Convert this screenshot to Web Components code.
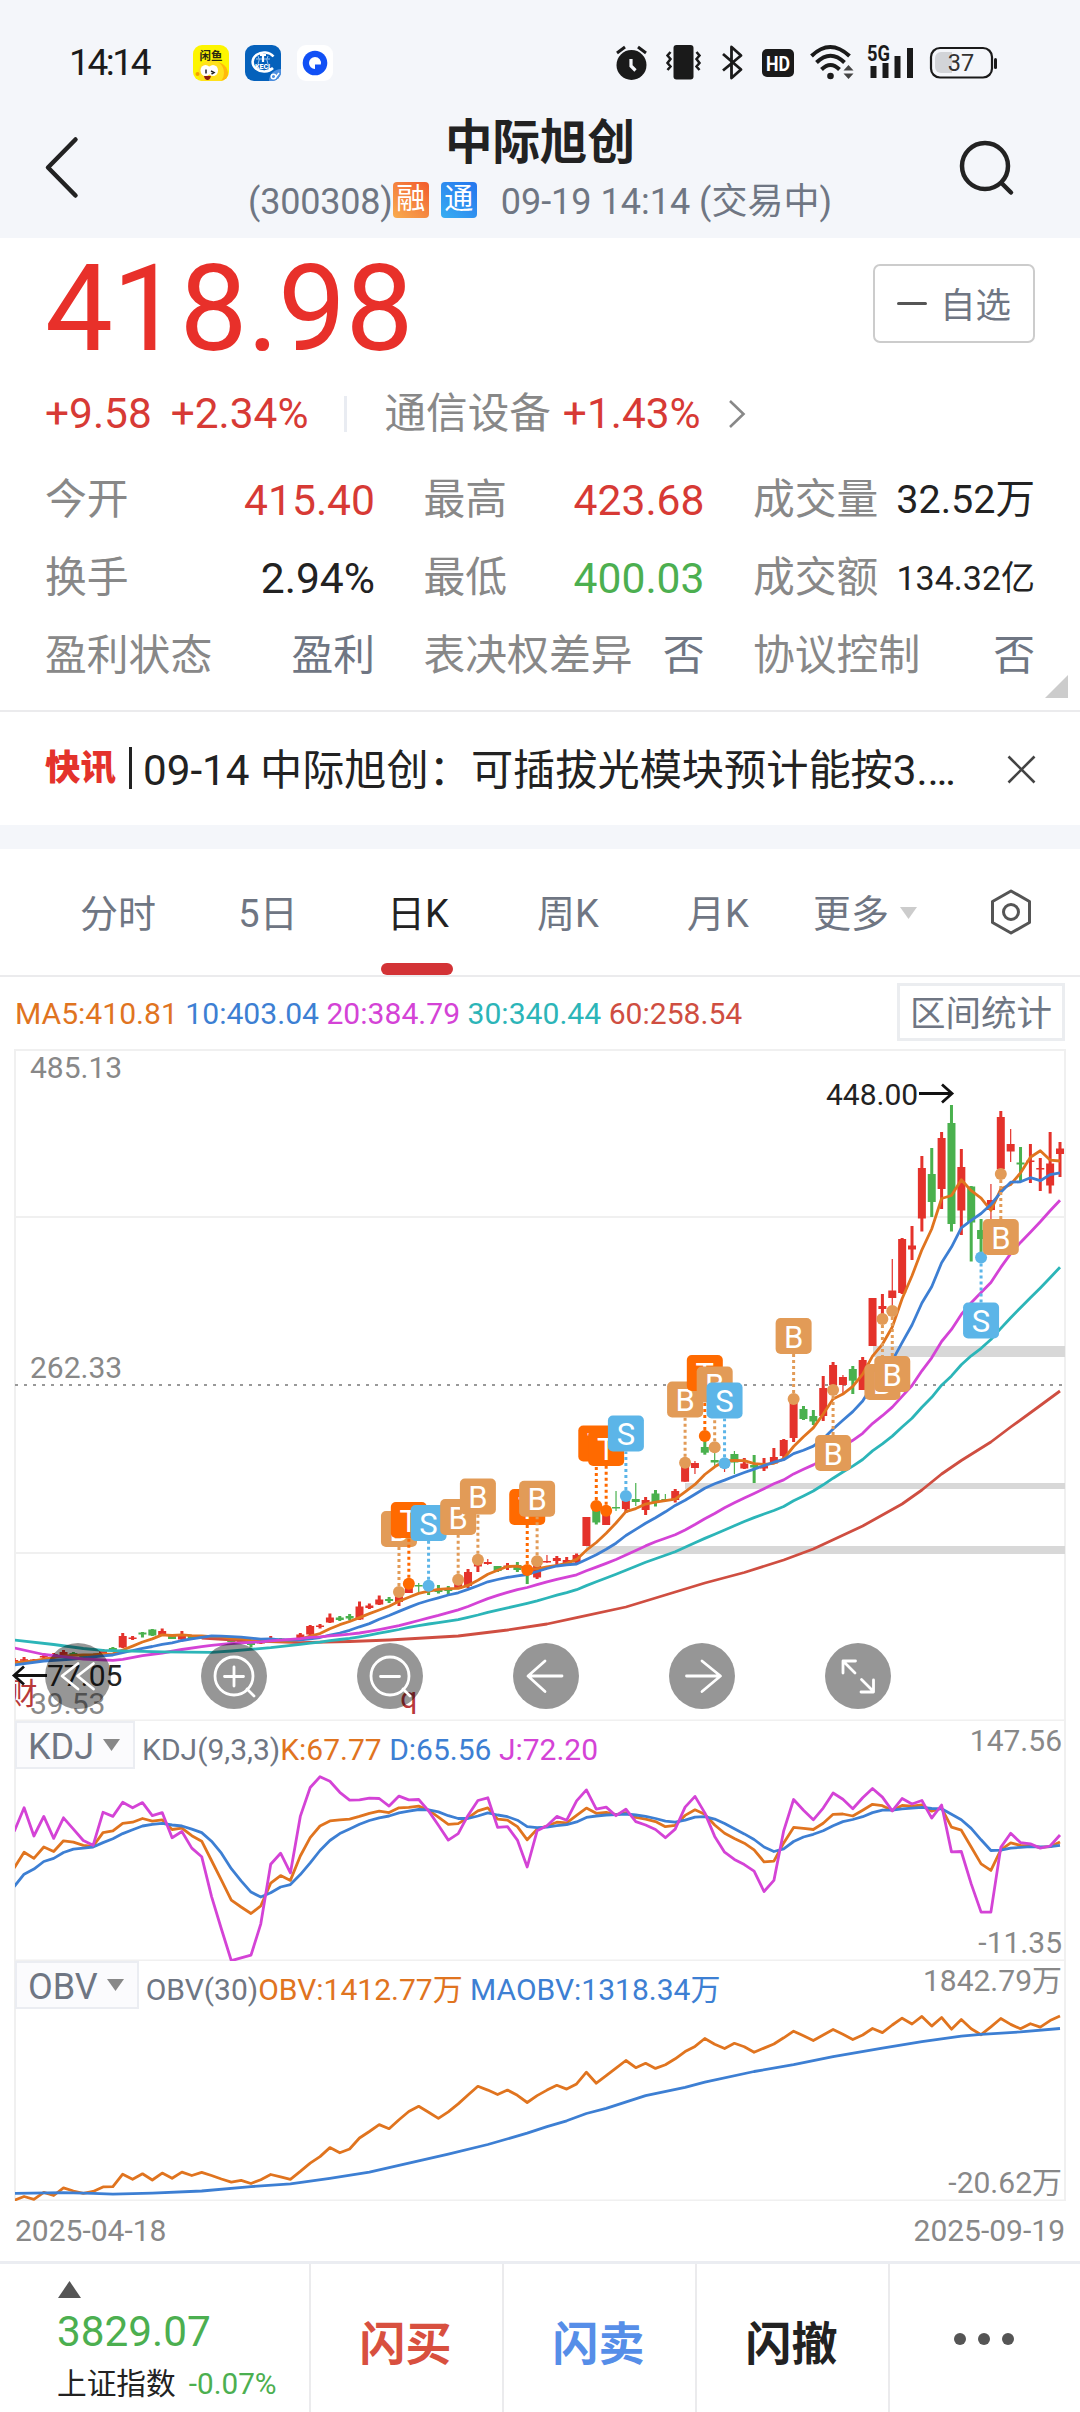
<!DOCTYPE html>
<html lang="zh-CN">
<head>
<meta charset="utf-8">
<title>中际旭创 300308</title>
<style>
    :root {
        --red: #e4322b;
        --value-red: #d73a35;
        --green: #4caf50;
        --label: #888;
        --slate: #6f7683;
        --ink: #222;
        --line: #ebebed;
        --band: #f4f6fa;
        --ma5: #e0741f;
        --ma10: #3d7fd3;
        --ma20: #d443d6;
        --ma30: #2cb5b8;
        --ma60: #cf4e41;
    }
    html, body {
        margin: 0;
        background: #fff;
    }
    body {
        width: 1080px;
        height: 2412px;
        overflow: hidden;
        display: flex;
        flex-direction: column;
        font-family: Roboto, "Noto Sans CJK SC", sans-serif;
        color: var(--ink);
    }
</style>
</head>
<body>
    <status-bar></status-bar>
    <quote-header code="300308" time="09-19 14:14 (交易中)">中际旭创</quote-header>
    <quote-summary></quote-summary>
    <news-ticker>09-14 中际旭创：可插拔光模块预计能按3.…</news-ticker>
    <chart-tabs></chart-tabs>
    <ma-legend></ma-legend>
    <kline-chart></kline-chart>
    <indicator-chart name="KDJ" params="(9,3,3)" max="147.56" min="-11.35"></indicator-chart>
    <indicator-chart name="OBV" params="(30)" max="1842.79万" min="-20.62万"></indicator-chart>
    <date-axis from="2025-04-18" to="2025-09-19"></date-axis>
    <trade-bar></trade-bar>

<script>
function define(name, html, render) {
    const template = document.createElement('template')
    template.innerHTML = html
    customElements.define(name, class extends HTMLElement {
        constructor() {
            super()
            this.attachShadow({ mode: 'open' })
            this.shadowRoot.appendChild(template.content.cloneNode(true))
        }
        connectedCallback() {
            if (render)
                render(this, this.shadowRoot)
        }
    })
}

define('status-bar', `
    <style>
        :host {
            display: flex;
            box-sizing: border-box;
            height: 100px;
            padding: 25px 83px 0 69px;
            align-items: center;
            background: var(--band);
        }
        .time {
            width: 124px;
            font-size: 37px;
            line-height: 44px;
            letter-spacing: -2.4px;
            color: #1b1b1b;
        }
        .apps {
            display: flex;
            gap: 16px;
            flex: 1;
        }
        .system {
            display: flex;
            align-items: center;
        }
        svg { display: block; overflow: visible; }
    </style>
    <div class="time">14:14</div>
    <div class="apps">
        <svg width="36" height="36" viewBox="0 0 36 36">
            <defs><clipPath id="c"><rect width="36" height="36" rx="9"/></clipPath></defs>
            <g clip-path="url(#c)">
                <rect width="36" height="36" fill="#fdf500"/>
                <circle cx="23" cy="29" r="12" fill="#ffb90a"/>
                <circle cx="18" cy="28" r="13" fill="#ffe11c"/>
                <circle cx="4.500" cy="29" r="2" fill="#f6a000"/>
                <text x="18" y="15" text-anchor="middle" font-size="11.500" font-weight="700" fill="#2a2a10">闲鱼</text>
                <ellipse cx="12.500" cy="25.500" rx="5" ry="5.500" fill="#fff"/>
                <ellipse cx="20" cy="25.500" rx="5" ry="5.500" fill="#fff"/>
                <path d="M13 24.500v4M18 26l3 1.500-2.500 1.500" stroke="#222" stroke-width="1.500" fill="none"/>
                <path d="M11 31h7q-1 4.500-4 4-2.500-.5-3-4z" fill="#8d1c10"/>
            </g>
        </svg>
        <svg width="36" height="36" viewBox="0 0 36 36">
            <defs><clipPath id="d"><rect width="36" height="36" rx="9"/></clipPath></defs>
            <g clip-path="url(#d)">
                <rect width="36" height="36" fill="#0561bb"/>
                <circle cx="36" cy="36" r="12" fill="#4e8fe0"/>
                <path d="M28.500 11.500A11.500 9.500 0 1 0 28 23" fill="none" stroke="#fff" stroke-width="2.500"/>
                <path d="M13 11q2.500 3 0 8M23 11q-2.500 3 0 8M11 14h14" fill="none" stroke="#9cc6f2" stroke-width="1"/>
                <path d="M15 10h6M18 10v7" stroke="#fff" stroke-width="2.200"/>
                <text x="18.500" y="24" text-anchor="middle" font-size="7" font-weight="900" fill="#fff">KECL</text>
                <circle cx="28.500" cy="31.500" r="2.300" fill="none" stroke="#fff" stroke-width="1.400"/>
                <path d="M30 33l4-5" stroke="#fff" stroke-width="1.400"/>
            </g>
        </svg>
        <svg width="36" height="36" viewBox="0 0 36 36">
            <rect width="36" height="36" rx="9" fill="#fff"/>
            <circle cx="18" cy="18" r="12.300" fill="#1150f5"/>
            <path d="M18 12a6 6 0 1 0 0 12v-4.500h5.800A6 6 0 0 0 18 12z" fill="#fff"/>
        </svg>
    </div>
    <div class="system">
        <svg width="31" height="35" viewBox="0 0 31 35">
            <circle cx="15.500" cy="20" r="15" fill="#1a1a1a"/>
            <path d="M1 8l8-6M30 8l-8-6" stroke="#1a1a1a" stroke-width="3"/>
            <path d="M15 14v7l4.500 4.500" stroke="#f4f6fa" stroke-width="3.200" fill="none"/>
        </svg>
        <svg width="35" height="35" viewBox="0 0 35 35" style="margin-left:19px">
            <rect x="7.500" y="0" width="20" height="34.500" rx="3" fill="#1a1a1a"/>
            <path d="M4.500 7l-3 3.500 3 3.500-3 4 3 3.500-3 3.500M30.500 7l3 3.500-3 3.500 3 4-3 3.500 3 3.500" stroke="#1a1a1a" stroke-width="2.500" fill="none"/>
        </svg>
        <svg width="21" height="35" viewBox="0 0 21 35" style="margin-left:21px">
            <path d="M1 9l18 15.500-9.500 8.500V2L19 10.500 1 25.500" fill="none" stroke="#1a1a1a" stroke-width="2.800" stroke-linejoin="round"/>
        </svg>
        <svg width="32" height="28" viewBox="0 0 32 28" style="margin-left:19px">
            <rect width="32" height="28" rx="5" fill="#1a1a1a"/>
            <text x="16" y="21.500" text-anchor="middle" font-size="21" font-weight="700" fill="#fff" textLength="24" lengthAdjust="spacingAndGlyphs">HD</text>
        </svg>
        <svg width="44" height="35" viewBox="0 0 44 35" style="margin-left:16px">
            <g fill="none" stroke="#1a1a1a" stroke-width="4">
                <path d="M1.500 11Q20 -7 39.500 11"/>
                <path d="M6.500 17.500Q20.500 4 34.500 17.500"/>
                <path d="M11.500 24.500Q20.500 15.500 29.500 24.500"/>
            </g>
            <circle cx="20.500" cy="31" r="3.300" fill="#1a1a1a"/>
            <path d="M33.500 25.500l5-5.500 5 5.500zM33.500 28.500l5 5.500 5-5.500z" fill="#444"/>
        </svg>
        <svg width="47" height="35" viewBox="0 0 47 35" style="margin-left:13px">
            <text x="0" y="16" font-size="21.500" font-weight="700" fill="#1a1a1a" textLength="23" lengthAdjust="spacingAndGlyphs">5G</text>
            <path d="M3.500 21h6v12h-6zM15.500 18h6v15h-6zM27.500 11h6v22h-6zM40 3h6v30h-6z" fill="#1a1a1a"/>
        </svg>
        <svg width="67" height="32" viewBox="0 0 67 32" style="margin-left:16px">
            <rect x="1" y="1" width="61" height="29.500" rx="9" fill="none" stroke="#1a1a1a" stroke-width="2.200"/>
            <path d="M22 5H11a6 6 0 0 0-6 6v9a6 6 0 0 0 6 6h11z" fill="#d2d4d8"/>
            <rect x="64" y="11" width="3" height="11" rx="1.500" fill="#1a1a1a"/>
            <text x="31" y="24" text-anchor="middle" font-size="23.500" fill="#333">37</text>
        </svg>
    </div>
`)

define('quote-header', `
    <style>
        :host {
            display: grid;
            grid-template-columns: 90px 1fr 90px;
            box-sizing: border-box;
            height: 138px;
            background: var(--band);
        }
        svg { display: block; }
        .back { margin: 35px 0 0 44px; }
        .search { margin: 38px 0 0 -32px; }
        .middle {
            display: flex;
            flex-direction: column;
            align-items: center;
        }
        .title {
            height: 60px;
            margin-top: 13px;
            font-size: 47.500px;
            line-height: 60px;
            font-weight: 700;
        }
        .sub {
            display: flex;
            align-items: center;
            height: 44px;
            margin-top: 7px;
            font-size: 36px;
            line-height: 44px;
            color: var(--slate);
            white-space: pre;
        }
        #code { letter-spacing: -0.200px; }
        .badge {
            width: 36px;
            height: 36px;
            margin: -5px 12px 0 0;
            border-radius: 4px;
            font-size: 29px;
            line-height: 35px;
            text-align: center;
            color: #fff;
            background: linear-gradient(40deg, #f9ac4e, #f4823f 55%, #f25a2b);
        }
        .badge + .badge {
            margin-right: 24px;
            background: linear-gradient(40deg, #37aef2, #2e8cef 55%, #2576ee);
        }
    </style>
    <svg class="back" width="36" height="64" viewBox="0 0 36 64"><path d="M31.500 4.500L4 32.500l27.500 28" fill="none" stroke="#222" stroke-width="4.500" stroke-linecap="round" stroke-linejoin="round"/></svg>
    <div class="middle">
        <div class="title"><slot></slot></div>
        <div class="sub"><span id="code"></span><span class="badge">融</span><span class="badge">通</span><span id="time"></span></div>
    </div>
    <svg class="search" width="60" height="60" viewBox="0 0 60 60"><circle cx="27" cy="28" r="23" fill="none" stroke="#222" stroke-width="4.500"/><path d="M43.500 45l9.500 9.500" stroke="#222" stroke-width="4.500" stroke-linecap="round"/></svg>
`, (host, root) => {
    root.getElementById('code').textContent = `(${host.getAttribute('code')})`
    root.getElementById('time').textContent = host.getAttribute('time')
})

define('stat-item', `
    <style>
        :host {
            display: flex;
            justify-content: space-between;
            align-items: center;
            height: 78px;
            font-size: 41.800px;
            line-height: 50px;
            white-space: nowrap;
            color: var(--label);
        }
        .value { color: var(--stat-color, var(--ink)); font-size: var(--stat-size, 42.600px); }
    </style>
    <span><slot name="label"></slot></span>
    <span class="value"><slot></slot></span>
`)

define('quote-summary', `
    <style>
        :host {
            display: block;
            position: relative;
            box-sizing: border-box;
            height: 474px;
            padding: 0 45px;
            border-bottom: 2px solid var(--line);
        }
        .top {
            display: flex;
            justify-content: space-between;
            height: 145px;
        }
        .price {
            margin-top: 1px;
            font-size: 121px;
            line-height: 140px;
            color: #e8302a;
            letter-spacing: -0.700px;
        }
        .watch {
            display: flex;
            align-items: center;
            box-sizing: border-box;
            width: 162px;
            height: 79px;
            margin-top: 26px;
            padding-left: 22px;
            border: 2px solid #ccc;
            border-radius: 7px;
            font-size: 35.500px;
            color: var(--slate);
        }
        .watch i {
            width: 30px;
            height: 3.500px;
            margin-right: 13px;
            background: #555;
            border-radius: 2px;
        }
        .watch span { line-height: 40px; padding-top: 4px; }
        .change {
            display: flex;
            align-items: center;
            height: 62px;
            font-size: 42.400px;
            line-height: 62px;
            color: var(--value-red);
        }
        .change .pct { margin-left: 19px; }
        .change .rule {
            width: 3px;
            height: 36px;
            margin: 0 37px 0 36px;
            background: #e9ecf2;
        }
        .change .sector {
            color: var(--label);
            margin-right: 12px;
            font-size: 41.600px;
        }
        .change svg { margin-left: 27px; }
        .stats {
            display: grid;
            grid-template-columns: 330px 281px 282px;
            justify-content: space-between;
            margin-top: 16px;
        }
        .r { --stat-color: var(--value-red); }
        .g { --stat-color: var(--green); }
        .s { --stat-color: var(--slate); --stat-size: 41.800px; }
        .corner {
            position: absolute;
            right: 12px;
            bottom: 12px;
        }
    </style>
    <div class="top">
        <div class="price">418.98</div>
        <div class="watch"><i></i><span>自选</span></div>
    </div>
    <div class="change">
        <span>+9.58</span><span class="pct">+2.34%</span>
        <span class="rule"></span>
        <span class="sector">通信设备</span><span>+1.43%</span>
        <svg width="18" height="30" viewBox="0 0 18 30"><path d="M2 2l13.500 13L2 28" fill="none" stroke="#888" stroke-width="2.600"/></svg>
    </div>
    <div class="stats">
        <stat-item class="r"><span slot="label">今开</span>415.40</stat-item>
        <stat-item class="r"><span slot="label">最高</span>423.68</stat-item>
        <stat-item style="--stat-size:39.500px"><span slot="label">成交量</span>32.52万</stat-item>
        <stat-item><span slot="label">换手</span>2.94%</stat-item>
        <stat-item class="g"><span slot="label">最低</span>400.03</stat-item>
        <stat-item style="--stat-size:34px"><span slot="label">成交额</span>134.32亿</stat-item>
        <stat-item class="s"><span slot="label">盈利状态</span>盈利</stat-item>
        <stat-item class="s"><span slot="label">表决权差异</span>否</stat-item>
        <stat-item class="s"><span slot="label">协议控制</span>否</stat-item>
    </div>
    <svg class="corner" width="23" height="23" viewBox="0 0 23 23"><path d="M23 0v23H0z" fill="#ccc"/></svg>
`)

define('news-ticker', `
    <style>
        :host {
            display: flex;
            align-items: center;
            box-sizing: border-box;
            height: 137px;
            padding: 2px 44px 0 45px;
            border-bottom: 24px solid var(--band);
        }
        b {
            margin-top: -3px;
            font-size: 35.500px;
            line-height: 40px;
            font-weight: 900;
            color: var(--red);
        }
        i {
            width: 3px;
            height: 42px;
            margin: -4px 11px 0 13px;
            background: #222;
        }
        span {
            flex: 1;
            font-size: 42.200px;
            line-height: 50px;
            padding-top: 2px;
            white-space: nowrap;
        }
    </style>
    <b>快讯</b><i></i><span><slot></slot></span>
    <svg width="29" height="29" viewBox="0 0 29 29"><path d="M1.500 1.500l26 26M27.500 1.500l-26 26" stroke="#444" stroke-width="2.600"/></svg>
`)

define('tab-item', `
    <style>
        :host {
            display: flex;
            flex-direction: column;
            align-items: center;
            justify-content: space-between;
            font-size: 38px;
            line-height: 50px;
            padding-top: 40px;
            color: var(--slate);
        }
        :host([selected]) { color: var(--ink); }
        i { width: 72px; height: 12px; margin-right: 2px; border-radius: 6px; }
        :host([selected]) i { background: #d33336; }
    </style>
    <span><slot></slot></span><i></i>
`)

define('chart-tabs', `
    <style>
        :host {
            display: flex;
            box-sizing: border-box;
            height: 128px;
            padding-left: 43px;
            border-bottom: 2px solid var(--line);
        }
        tab-item { width: 150px; }
        .more {
            display: flex;
            align-items: center;
            height: 50px;
            margin: 40px 73px 0 20px;
            font-size: 38px;
            line-height: 50px;
            color: var(--slate);
        }
        .more svg { margin: -3px 0 0 11px; }
        .gear { margin-top: 40px; }
    </style>
    <tab-item>分时</tab-item>
    <tab-item>5日</tab-item>
    <tab-item selected>日K</tab-item>
    <tab-item>周K</tab-item>
    <tab-item>月K</tab-item>
    <div class="more">更多<svg width="17" height="12" viewBox="0 0 17 12"><path d="M0 0h17L8.500 12z" fill="#ccc"/></svg></div>
    <svg class="gear" width="42" height="46" viewBox="0 0 42 46"><path d="M21 2l18.500 10.500v21L21 44 2.500 33.500v-21z" fill="none" stroke="#555" stroke-width="3" stroke-linejoin="round"/><circle cx="21" cy="23" r="7.500" fill="none" stroke="#555" stroke-width="3"/></svg>
`)

define('ma-legend', `
    <style>
        :host {
            display: flex;
            align-items: center;
            justify-content: space-between;
            height: 72px;
            padding: 2px 15px 0 15px;
            box-sizing: border-box;
            font-size: 30.100px;
            line-height: 36px;
            white-space: pre;
        }
        button {
            box-sizing: border-box;
            width: 168px;
            height: 58px;
            margin: -4px 0 0;
            padding: 5px 0 0;
            border: 3px solid #ebedf0;
            background: #fff;
            font: 35.500px/47px Roboto, "Noto Sans CJK SC", sans-serif;
            color: var(--slate);
        }
    </style>
    <div><span style="color:var(--ma5)">MA5:410.81</span> <span style="color:var(--ma10)">10:403.04</span> <span style="color:var(--ma20)">20:384.79</span> <span style="color:var(--ma30)">30:340.44</span> <span style="color:var(--ma60)">60:258.54</span></div>
    <button>区间统计</button>
`)

// horizontal centre of day i, shared by all charts
const dayX = i => 14.2 + 9.866 * i

const polyline = (points, color, width = 2.8) =>
    `<polyline points="${points.map(([i, y]) => `${dayX(i).toFixed(1)},${y.toFixed(1)}`).join(' ')}" fill="none" stroke="${color}" stroke-width="${width}" stroke-linejoin="round"/>`

// [direction, high, body top, body bottom, low]
const candles = [
    ['r', 1658, 1660, 1662, 1664], ['r', 1657, 1659.2, 1660.8, 1662], ['r', 1659, 1659.5, 1661, 1661.5], ['r', 1653, 1656, 1657.5, 1660],
    ['r', 1653, 1654, 1656, 1657], ['r', 1650, 1652, 1657, 1657], ['g', 1652, 1653, 1655.5, 1656], ['g', 1655, 1655, 1657, 1657],
    ['r', 1654, 1655, 1657, 1657], ['r', 1649, 1651, 1653.5, 1654], ['g', 1647, 1648, 1651, 1652], ['r', 1633, 1636, 1647.5, 1648],
    ['r', 1636, 1637.5, 1639, 1640], ['g', 1632, 1632.5, 1634.5, 1637.5], ['g', 1629, 1629.5, 1635.5, 1636], ['r', 1628.5, 1631, 1635, 1635],
    ['g', 1634, 1634, 1639, 1639], ['r', 1631, 1634, 1639.5, 1641], ['g', 1635, 1635, 1639, 1639], ['r', 1636, 1636, 1638.5, 1638.5],
    ['r', 1635, 1635.5, 1638.5, 1639], ['g', 1636, 1636, 1639.5, 1640], ['g', 1638, 1638, 1642, 1642], ['r', 1640, 1640, 1643.5, 1644],
    ['g', 1642, 1643, 1645, 1647.5], ['r', 1641.5, 1641.5, 1643.5, 1644], ['r', 1636, 1638, 1641, 1641], ['g', 1638, 1638.5, 1642, 1642],
    ['r', 1639, 1640, 1641.5, 1642], ['r', 1633, 1634.5, 1640.5, 1641], ['r', 1625, 1626, 1634.5, 1636], ['r', 1624, 1625.5, 1627, 1628.5],
    ['r', 1613.5, 1617.5, 1622.5, 1623], ['g', 1616, 1617.5, 1620, 1621], ['g', 1614, 1616, 1618.5, 1620.5], ['r', 1601.5, 1606.5, 1619.5, 1620],
    ['r', 1603.5, 1605.5, 1608, 1609], ['r', 1595.5, 1599.5, 1604.5, 1605], ['g', 1597, 1599, 1601, 1603], ['r', 1592, 1594, 1602, 1606],
    ['r', 1584, 1586, 1593, 1593], ['g', 1583, 1585, 1586.5, 1592, 1], ['g', 1583, 1583, 1588, 1595], ['g', 1585, 1589, 1592, 1593.5],
    ['g', 1586, 1589, 1591, 1595], ['r', 1580, 1584, 1588.5, 1589], ['r', 1569, 1572, 1586, 1588], ['r', 1560, 1562, 1566.5, 1572],
    ['r', 1559, 1562, 1564, 1565, 1], ['g', 1566, 1566, 1571, 1572], ['r', 1563, 1565.5, 1567.5, 1570], ['g', 1562, 1565, 1570, 1572],
    ['g', 1565, 1567, 1575, 1584], ['r', 1561, 1563, 1577.5, 1579], ['r', 1555, 1561, 1562.5, 1563, 1], ['r', 1556, 1558, 1561, 1567],
    ['r', 1557, 1560, 1564, 1566], ['r', 1553.5, 1555, 1562.5, 1564], ['r', 1517, 1517, 1546, 1546], ['g', 1506, 1508, 1522.5, 1524.5],
    ['r', 1511, 1512, 1525, 1525], ['g', 1491, 1507, 1508.5, 1511, 1], ['r', 1496, 1498, 1509, 1513], ['g', 1483, 1499, 1502, 1506, 1],
    ['r', 1497, 1500, 1510, 1515], ['g', 1490, 1493.5, 1502, 1506.5], ['g', 1494, 1499, 1501, 1502, 1], ['r', 1489, 1491, 1500, 1502.5],
    ['r', 1463, 1465, 1481.7, 1481.7], ['r', 1461, 1463, 1468, 1474, 1], ['g', 1438, 1447, 1452.7, 1454.7], ['g', 1447, 1460, 1462.5, 1466, 1],
    ['r', 1460, 1462, 1468, 1472, 1], ['g', 1451, 1454, 1462.5, 1474, 1], ['r', 1458, 1463.5, 1468.5, 1469], ['g', 1455, 1465, 1467.5, 1483],
    ['r', 1458, 1466, 1468.5, 1471], ['r', 1448, 1457, 1463.5, 1464], ['r', 1439, 1440, 1456, 1459], ['r', 1400, 1402, 1438, 1442],
    ['g', 1406, 1409, 1419, 1420], ['g', 1410, 1416, 1421.5, 1425], ['r', 1376, 1388, 1416, 1421], ['r', 1362, 1365, 1385, 1394],
    ['r', 1375, 1377, 1385, 1393, 1], ['g', 1366, 1369, 1380.7, 1394], ['r', 1357, 1360, 1390, 1390], ['r', 1298, 1298, 1346, 1346],
    ['r', 1294, 1306, 1309, 1319], ['r', 1259, 1290.5, 1298, 1310, 1], ['r', 1238, 1239, 1293, 1294], ['r', 1226, 1245.5, 1249.5, 1260],
    ['r', 1156, 1168, 1218.5, 1231.5], ['g', 1148, 1174, 1202, 1217], ['r', 1132, 1138, 1189, 1209], ['g', 1105, 1123, 1224, 1231.5],
    ['r', 1149, 1167, 1210.5, 1235], ['g', 1186, 1186.5, 1222.5, 1261.5], ['g', 1219, 1230, 1239, 1254], ['r', 1184, 1200, 1210, 1220, 1],
    ['r', 1111, 1117, 1169, 1172], ['r', 1129, 1144, 1151.5, 1162, 1], ['g', 1147, 1162.5, 1164.5, 1182], ['r', 1144, 1160.5, 1162, 1183],
    ['r', 1158, 1168, 1169.5, 1191], ['r', 1132, 1163.5, 1185.5, 1193.5], ['r', 1142, 1148.5, 1154, 1177]
]
const closes = candles.map(c => c[0] == 'r' ? c[2] : c[3])

// seed carries the days for which there is not yet enough history on screen
function average(length, seed) {
    const points = seed.slice()
    for (let i = length - 1; i < closes.length; i++)
        points.push([i, closes.slice(i - length + 1, i + 1).reduce((a, b) => a + b) / length])
    return points
}

// [kind, day, dot y, tag top]
const marks = [
    ['B', 39, 1592, 1511], ['T', 40, 1583.7, 1502], ['S', 42, 1585.7, 1505], ['B', 45, 1579.7, 1499], ['B', 47, 1559.7, 1478.5],
    ['T', 52, 1570, 1489], ['B', 53, 1561.3, 1480.7], ['T', 59, 1506, 1425.5], ['T', 60, 1510.7, 1430], ['S', 62, 1496, 1415.5],
    ['B', 68, 1462.7, 1381.5], ['T', 70, 1436, 1355], ['B', 71, 1447.3, 1366.5], ['S', 72, 1463.3, 1382.5], ['B', 79, 1399, 1318],
    ['B', 83, 1390, 1435], ['B', 88, 1319, 1364], ['B', 89, 1311, 1356], ['S', 98, 1257.5, 1302.5], ['B', 100, 1174, 1219]
]
const markColors = { B: '#e29b57', T: '#ff6a00', S: '#5cb5e8' }

define('round-button', `
    <style>
        :host {
            display: block;
            width: 66px;
            height: 66px;
            border-radius: 50%;
            background: rgba(0, 0, 0, 0.41);
        }
        svg { display: block; }
    </style>
    <svg width="66" height="66" viewBox="0 0 66 66" fill="none" stroke="#fff" stroke-width="2.800" stroke-linecap="round" stroke-linejoin="round"></svg>
`, (host, root) => {
    const icons = {
        rewind: 'M33 20.500L17 33l16 13M48.500 20.500L32.500 33l16 13',
        plus: 'M46 46l7 7M33 24v19M23.500 33.500h19',
        minus: 'M46 46l7 7M23.500 33.500h19',
        left: 'M49 33H16M32 18L15 33l17 15.500',
        right: 'M17.500 33H51M33 18l18.500 15L33 48.500',
        expand: 'M30 30L18.500 18.500M18 30V18h12.500M36.500 36.500L48 48M48.500 37v12H36'
    }
    const icon = host.getAttribute('icon')
    const lens = icon == 'plus' || icon == 'minus' ? '<circle cx="33" cy="33" r="19"/>' : ''
    root.querySelector('svg').innerHTML = `${lens}<path d="${icons[icon]}"/>`
})

define('kline-chart', `
    <style>
        :host {
            display: block;
            position: relative;
            height: 672px;
        }
        svg { display: block; }
        .tools {
            position: absolute;
            left: 45px;
            top: 594px;
            display: flex;
            gap: 90px;
        }
    </style>
    <svg width="1080" height="672" viewBox="0 1049 1080 672"></svg>
    <div class="tools">
        <round-button icon="rewind"></round-button>
        <round-button icon="plus"></round-button>
        <round-button icon="minus"></round-button>
        <round-button icon="left"></round-button>
        <round-button icon="right"></round-button>
        <round-button icon="expand"></round-button>
    </div>
`, (host, root) => {
    const fills = { r: '#e4322b', g: '#4ab14e' }
    const bars = candles.map(([dir, high, top, bottom, low, thin], i) => {
        const x = dayX(i)
        const wick = thin ? 1.2 : 3
        return `<g fill="${fills[dir]}"><rect x="${x - wick / 2}" y="${high}" width="${wick}" height="${low - high}"/>`
            + `<rect x="${x - 4}" y="${top}" width="8" height="${bottom - top}"/></g>`
    }).join('')

    const tags = marks.map(([kind, day, dot, top]) => {
        const x = dayX(day)
        const color = markColors[kind]
        const end = top > dot ? top : top + 36
        return `<path d="M${x} ${dot}V${end}" stroke="${color}" stroke-width="3" stroke-dasharray="3 3"/>`
            + `<circle cx="${x}" cy="${dot}" r="6" fill="${color}"/>`
            + `<rect x="${x - 18}" y="${top}" width="36" height="36" rx="5" fill="${color}"/>`
            + `<text x="${x}" y="${top + 29.5}" font-size="31" text-anchor="middle" fill="#fff">${kind}</text>`
    }).join('')

    root.querySelector('svg').innerHTML = `
        <defs><clipPath id="plot"><rect x="15" y="1049" width="1050" height="672"/></clipPath></defs>
        <g stroke="#f0f0f0" stroke-width="2" fill="none">
            <path d="M15 1721V1050H1065V1721M15 1217H1065M15 1553H1065M15 1720.500H1065"/>
        </g>
        <path d="M15 1385H1064" stroke="#999" stroke-width="2" stroke-dasharray="3 6"/>
        <g fill="#d8d8d8">
            <rect x="873" y="1346" width="192" height="11"/>
            <rect x="685" y="1483" width="380" height="6"/>
            <rect x="586" y="1546" width="479" height="8"/>
        </g>
        <g font-size="30" fill="#888">
            <text x="30" y="1078">485.13</text>
            <text x="30" y="1378">262.33</text>
            <text x="30" y="1714">39.53</text>
        </g>
        <g clip-path="url(#plot)">
            ${bars}
            ${polyline([[19, 1638], [24, 1641], [29, 1642.7], [34, 1641.5], [38, 1640], [45, 1636], [50, 1630], [54, 1624], [57, 1617.7], [62, 1607], [67, 1592], [70, 1583], [74, 1572.5], [78, 1560], [81, 1549], [86, 1526], [90, 1504], [92, 1490], [94, 1474], [96, 1460.5], [99, 1442], [101, 1427], [104, 1405.5], [106, 1391]], 'var(--ma60)')}
            ${polyline(average(5, [[0, 1662.7], [1, 1661.8], [2, 1660.8], [3, 1659.2]]), 'var(--ma5)')}
            ${polyline(average(10, [[0, 1665], [3, 1661], [6, 1659]]), 'var(--ma10)')}
            ${polyline(average(20, [[0, 1648], [3, 1654.5], [5, 1656.7], [7, 1659], [10, 1660.3], [11, 1659.3], [13, 1655.7], [15, 1653], [17, 1649.5]]), 'var(--ma20)')}
            ${polyline(average(30, [[0, 1640], [4, 1644.5], [7, 1648.5], [9, 1650.3], [15, 1651.8], [20, 1652.3], [22, 1651], [26, 1647.7]]), 'var(--ma30)')}
            <g font-size="30" fill="#b8393a" text-anchor="middle">
                <text x="22.500" y="1704">财</text>
                <text x="408.700" y="1708">q</text>
            </g>
        </g>
        ${tags}
        <g fill="none" stroke="#111" stroke-width="2.800">
            <path d="M47 1675.500H15M24 1666.500l-10 9 10 9"/>
            <path d="M919 1093.500h32M942 1084.500l10 9-10 9"/>
        </g>
        <g font-size="30" fill="#222">
            <text x="47" y="1686">77.05</text>
            <text x="826" y="1105">448.00</text>
        </g>`
})

const series = {
    KDJ: {
        legend: [['K:67.77', 'var(--ma5)'], ['D:65.56', 'var(--ma10)'], ['J:72.20', 'var(--ma20)']],
        base: 31,
        lines: [
            ['var(--ma5)', [458, 412, 430, 397, 410, 379, 383, 392, 395, 355, 350, 328, 325, 314, 322, 318, 346, 342, 364, 380, 436, 493, 551, 571, 590, 568, 502, 480, 494, 423, 370, 336, 321, 318, 316, 308, 299, 293, 297, 283, 282, 278, 290, 310, 331, 329, 312, 292, 283, 316, 319, 338, 376, 345, 336, 325, 327, 305, 284, 299, 296, 303, 297, 311, 316, 323, 338, 334, 305, 289, 302, 333, 357, 372, 386, 405, 440, 438, 385, 340, 343, 346, 328, 302, 301, 307, 290, 273, 277, 291, 276, 278, 275, 293, 284, 339, 348, 397, 446, 465, 405, 385, 392, 393, 398, 396, 382]],
            ['var(--ma10)', [512, 476, 461, 439, 430, 413, 403, 400, 397, 384, 373, 358, 347, 336, 331, 328, 333, 336, 345, 355, 380, 415, 460, 495, 528, 542, 530, 513, 506, 477, 443, 407, 378, 358, 345, 331, 320, 312, 307, 298, 293, 288, 289, 295, 306, 314, 314, 307, 298, 304, 309, 319, 338, 341, 339, 335, 332, 324, 311, 307, 304, 303, 301, 304, 308, 314, 322, 325, 319, 310, 309, 316, 329, 344, 359, 375, 397, 410, 402, 381, 368, 360, 350, 335, 323, 317, 309, 297, 290, 290, 286, 284, 282, 285, 286, 302, 318, 343, 376, 407, 406, 400, 398, 396, 397, 396, 392]],
            ['var(--ma20)', [352, 283, 365, 308, 372, 312, 345, 378, 392, 296, 308, 267, 283, 268, 306, 297, 370, 352, 400, 425, 540, 635, 727, 719, 711, 620, 447, 415, 472, 308, 224, 193, 206, 238, 261, 260, 255, 256, 278, 249, 260, 259, 292, 334, 377, 358, 305, 262, 254, 340, 338, 377, 455, 350, 335, 308, 319, 263, 231, 287, 281, 306, 287, 323, 333, 346, 370, 345, 281, 250, 298, 366, 412, 433, 448, 467, 526, 494, 350, 259, 290, 318, 284, 240, 258, 286, 254, 227, 252, 292, 256, 272, 262, 313, 275, 411, 410, 504, 586, 586, 398, 357, 384, 388, 400, 394, 362]]
        ]
    },
    OBV: {
        legend: [['OBV:1412.77万', 'var(--ma5)'], ['MAOBV:1318.34万', 'var(--ma10)']],
        base: 729,
        lines: [
            ['var(--ma5)', [1424, 1413, 1421, 1401, 1410, 1388, 1397, 1404, 1398, 1385, 1384, 1348, 1363, 1347, 1365, 1345, 1360, 1342, 1352, 1343, 1352, 1362, 1371, 1366, 1375, 1364, 1349, 1356, 1363, 1340, 1316, 1297, 1271, 1286, 1275, 1243, 1224, 1204, 1216, 1190, 1166, 1151, 1168, 1186, 1167, 1144, 1118, 1093, 1104, 1117, 1104, 1119, 1140, 1120, 1104, 1090, 1101, 1086, 1052, 1084, 1062, 1040, 1018, 1039, 1026, 1041, 1030, 1013, 992, 977, 954, 971, 983, 968, 978, 994, 982, 970, 952, 933, 946, 960, 944, 928, 942, 957, 944, 925, 937, 915, 895, 912, 890, 918, 893, 927, 899, 926, 943, 920, 896, 913, 926, 911, 921, 902, 889]],
            ['var(--ma10)', [[0, 1404], [5, 1402], [8, 1404], [10, 1406], [14, 1403], [19, 1397], [24, 1384], [28, 1376], [32, 1360], [36, 1342], [40, 1316], [44, 1290], [48, 1262], [52, 1229], [54, 1210], [56, 1193], [58, 1172], [60, 1157], [64, 1120], [68, 1096], [70, 1081], [75, 1050], [79, 1030], [83, 1007], [88, 982], [92, 963], [96, 947], [98, 942], [102, 935], [106, 925]]]
        ]
    }
}

define('indicator-chart', `
    <style>
        :host {
            display: grid;
            height: 240px;
            font-size: 30px;
            line-height: 36px;
            color: var(--slate);
        }
        svg, .head, .scale { grid-area: 1 / 1; }
        .head {
            display: flex;
            align-items: flex-start;
            padding-left: 15px;
            white-space: pre;
        }
        .pick {
            display: flex;
            align-items: center;
            box-sizing: border-box;
            height: 48px;
            padding: 3px 13px 0 11px;
            border: 2px solid #ebedf2;
            background: #fbfbfd;
            font-size: 36px;
        }
        .pick svg { margin: -4px 0 0 9px; }
        #legend { margin: 11px 0 0 7px; }
        .scale {
            display: flex;
            flex-direction: column;
            justify-content: space-between;
            align-items: flex-end;
            padding: 2px 18px 0 0;
            color: var(--label);
        }
    </style>
    <svg id="plot" width="1080" height="240"></svg>
    <div class="head">
        <div class="pick"><span id="name"></span><svg width="17" height="12" viewBox="0 0 17 12"><path d="M0 0h17L8.500 12z" fill="#888"/></svg></div>
        <div id="legend"></div>
    </div>
    <div class="scale"><span id="max"></span><span id="min"></span></div>
`, (host, root) => {
    const name = host.getAttribute('name')
    const { legend, base, lines } = series[name]
    root.getElementById('name').textContent = name
    root.getElementById('max').textContent = host.getAttribute('max')
    root.getElementById('min').textContent = host.getAttribute('min')
    root.getElementById('legend').innerHTML = name + host.getAttribute('params')
        + legend.map(([text, color]) => `<span style="color:${color}">${text}</span>`).join(' ')
    root.getElementById('plot').innerHTML = `
        <defs><clipPath id="clip"><rect x="15" width="1050" height="240"/></clipPath></defs>
        <path d="M15 0V239.500H1065V0" fill="none" stroke="#f0f0f0" stroke-width="2"/>
        <g clip-path="url(#clip)">${lines.map(([color, values]) =>
            polyline(values.map((v, i) => Array.isArray(v) ? [v[0], (v[1] - base) / 2.904] : [i, (v - base) / 2.904]), color)).join('')}</g>`
})

define('date-axis', `
    <style>
        :host {
            display: flex;
            justify-content: space-between;
            box-sizing: border-box;
            height: 60px;
            padding: 12px 15px 0;
            font-size: 30px;
            line-height: 36px;
            color: var(--label);
        }
    </style>
    <span id="from"></span><span id="to"></span>
`, (host, root) => {
    root.getElementById('from').textContent = host.getAttribute('from')
    root.getElementById('to').textContent = host.getAttribute('to')
})

define('trade-bar', `
    <style>
        :host {
            display: grid;
            grid-template-columns: 309px 193px 193px 193px 1fr;
            box-sizing: border-box;
            flex: 1;
            border-top: 3px solid #ebedf2;
        }
        .cell {
            display: flex;
            align-items: center;
            justify-content: center;
            padding: 4px 2px 0 0;
            border-left: 2px solid var(--line);
            font-size: 46px;
            font-weight: 700;
        }
        .cell svg { margin-top: -2px; }
        .index { padding: 17px 0 0 57px; }
        .index svg { display: block; margin-left: 1px; }
        .last {
            margin-top: 9px;
            font-size: 42.300px;
            line-height: 50px;
            color: var(--green);
        }
        .name {
            display: flex;
            gap: 13px;
            margin-top: 7px;
            font-size: 29.700px;
            line-height: 40px;
            white-space: nowrap;
        }
        .name span + span { color: var(--green); }
    </style>
    <div class="index">
        <svg width="23" height="17" viewBox="0 0 23 17"><path d="M11.500 0L23 17H0z" fill="#555"/></svg>
        <div class="last">3829.07</div>
        <div class="name"><span>上证指数</span><span>-0.07%</span></div>
    </div>
    <div class="cell" style="color:#d8503f">闪买</div>
    <div class="cell" style="color:#568ee8">闪卖</div>
    <div class="cell">闪撤</div>
    <div class="cell"><svg width="62" height="14" viewBox="0 0 62 14" fill="#555"><circle cx="7" cy="7" r="6"/><circle cx="31" cy="7" r="6"/><circle cx="55" cy="7" r="6"/></svg></div>
`)
</script>
</body>
</html>
